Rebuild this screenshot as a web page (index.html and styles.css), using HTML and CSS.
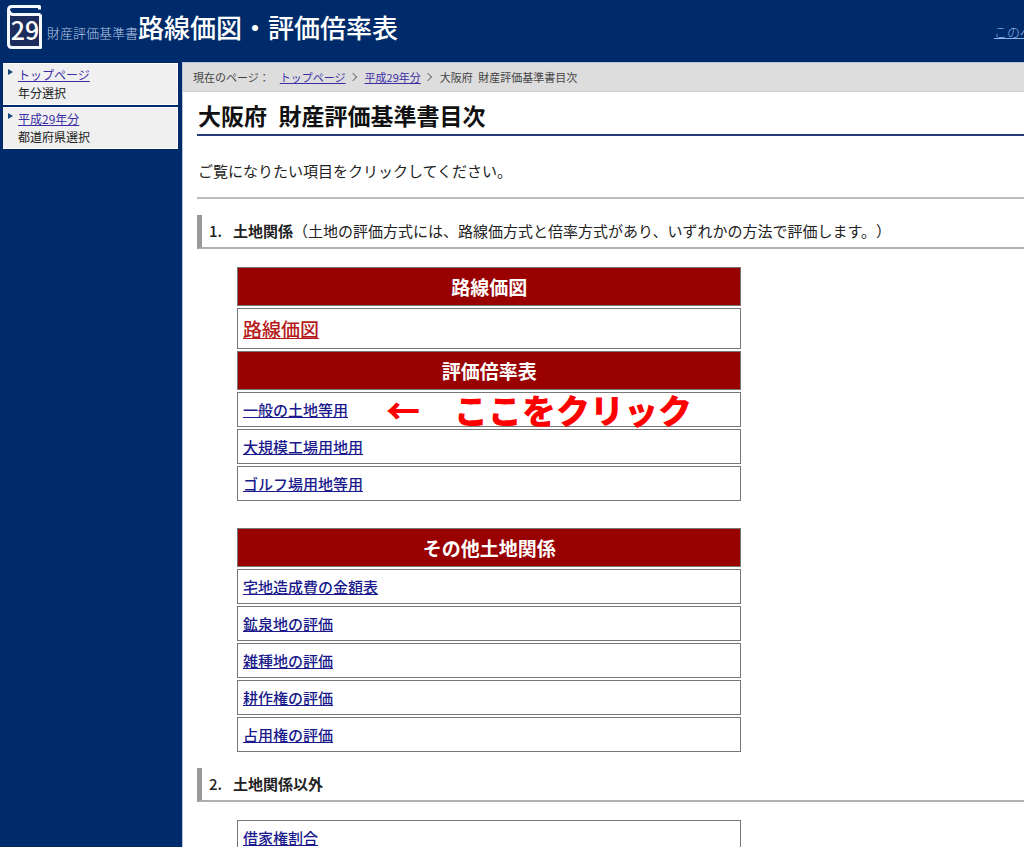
FILE: index.html
```html
<!DOCTYPE html>
<html lang="ja">
<head>
<meta charset="utf-8">
<title>路線価図・評価倍率表</title>
<link rel="stylesheet" href="styles.css">
</head>
<body>
<div class="page">
  <header class="header">
    <svg class="logo" viewBox="0 0 36 46" role="img" aria-label="29">
      <path class="logo-cover" d="M4 9.500H33.500V42.500H4.500Q2 42.500 2 39.500V6"/>
      <path class="logo-line" d="M33.500 9.500V42.500H5Q1.500 42.500 1.500 39V5Q1.500 1.500 5 1.500H32.500V4.500M2 6Q3 9.500 6 9.500H33.500"/>
      <text class="logo-text" x="18" y="35" text-anchor="middle">29</text>
    </svg>
    <p class="brand"><span class="brand-sub">財産評価基準書</span><span class="brand-main">路線価図・評価倍率表</span></p>
    <a class="help" href="#">このペ</a>
  </header>
  <div class="body">
    <nav class="side">
      <div class="side-item"><a href="#">トップページ</a><span>年分選択</span></div>
      <div class="side-item"><a href="#">平成29年分</a><span>都道府県選択</span></div>
    </nav>
    <main class="main">
      <div class="crumbs"><span>現在のページ：</span><a href="#">トップページ</a><i class="chevron"></i><a href="#">平成29年分</a><i class="chevron"></i><span>大阪府&ensp;財産評価基準書目次</span></div>
      <div class="content">
        <h1 class="title">大阪府&ensp;財産評価基準書目次</h1>
        <p class="intro">ご覧になりたい項目をクリックしてください。</p>
        <h2 class="section"><span class="num">1.</span><b>土地関係</b>（土地の評価方式には、路線価方式と倍率方式があり、いずれかの方法で評価します。）</h2>
        <table class="list">
          <tr><th>路線価図</th></tr>
          <tr><td class="large"><a class="active" href="#">路線価図</a></td></tr>
          <tr><th>評価倍率表</th></tr>
          <tr><td class="noted"><a href="#">一般の土地等用</a><strong class="note">←　ここをクリック</strong></td></tr>
          <tr><td><a href="#">大規模工場用地用</a></td></tr>
          <tr><td><a href="#">ゴルフ場用地等用</a></td></tr>
        </table>
        <table class="list">
          <tr><th>その他土地関係</th></tr>
          <tr><td><a href="#">宅地造成費の金額表</a></td></tr>
          <tr><td><a href="#">鉱泉地の評価</a></td></tr>
          <tr><td><a href="#">雑種地の評価</a></td></tr>
          <tr><td><a href="#">耕作権の評価</a></td></tr>
          <tr><td><a href="#">占用権の評価</a></td></tr>
        </table>
        <h2 class="section"><span class="num">2.</span><b>土地関係以外</b></h2>
        <table class="list">
          <tr><td><a href="#">借家権割合</a></td></tr>
        </table>
      </div>
    </main>
  </div>
</div>
</body>
</html>
```
FILE: styles.css
```css
* { box-sizing: border-box; }
body {
  margin: 0;
  background: #fff;
  color: #222;
  font-family: "Noto Sans CJK JP", sans-serif;
  font-size: 15px;
  text-spacing-trim: space-all;
}
.page {
  display: flex;
  flex-direction: column;
  height: calc(100vh - 6px);
  overflow: hidden;
  background: #002b6b;
}
.header {
  display: flex;
  flex: none;
  align-items: center;
  height: 62px;
  padding: 0 0 6px 7px;
  color: #fff;
  white-space: nowrap;
}
.logo { width: 36px; height: 46px; flex: none; }
.logo-cover { fill: #1c2c5c; }
.logo-line { fill: none; stroke: #f4f8ff; stroke-width: 3; stroke-linejoin: round; }
.logo-text { fill: #fff; font: 500 25px "Noto Sans CJK JP", sans-serif; }
.brand { margin: 0 auto 0 4px; padding-top: 3px; line-height: 38px; }
.brand-sub { color: #b5c8e8; font-size: 13px; font-weight: 300; }
.brand-main { font-size: 26px; font-weight: 500; }
.help {
  width: 30px;
  margin-top: 6px;
  overflow: hidden;
  color: #8fb4e6;
  font-size: 13px;
  font-weight: 300;
}
.body { display: flex; flex: 1; min-height: 0; }
.side {
  flex: none;
  display: flex;
  flex-direction: column;
  gap: 2px;
  width: 182px;
  padding: 1px 4px 0 3px;
}
.side-item {
  position: relative;
  display: flex;
  flex-direction: column;
  padding: 2px 0 2px 15px;
  background: #f0f0f0;
  font-size: 12px;
  line-height: 18px;
  border: 1px solid #fff;
  border-left: 0;
}
.side-item::before {
  content: "";
  position: absolute;
  left: 5px;
  top: 5px;
  border: 3px solid transparent;
  border-left: 5px solid #17477f;
  border-right: 0;
}
.side a, .crumbs a { color: #3b2ea5; }
.main {
  flex: 1;
  min-width: 0;
  border-top: 1px solid #b9c3dc;
  border-left: 1px solid #b9c3dc;
  background: #fff;
}
.crumbs {
  display: flex;
  align-items: center;
  height: 29px;
  padding-left: 10px;
  background: #ddd;
  border-bottom: 1px solid #d0d0d0;
  color: #444;
  font-size: 11px;
  white-space: nowrap;
}
.crumbs span:first-child { margin-right: 10px; }
.chevron {
  width: 6px;
  height: 6px;
  margin: 0 9px 0 4px;
  border: solid #777;
  border-width: 1px 1px 0 0;
  transform: rotate(45deg);
}
.content { padding: 6px 0 0 14px; }
.title {
  margin: 0;
  padding: 0 0 2px 1px;
  border-bottom: 2px solid #25397b;
  color: #111;
  font-size: 23px;
  font-weight: 700;
  line-height: 34px;
}
.intro {
  margin: 0 0 16px;
  padding: 23px 0 14px 1px;
  border-bottom: 2px solid #bbb;
  line-height: 24px;
}
.section {
  margin: 0 0 16px;
  padding: 4px 0 4px 7px;
  border-left: 5px solid #999;
  border-bottom: 2px solid #b0b0b0;
  font-size: 15px;
  font-weight: 400;
  line-height: 24px;
  white-space: nowrap;
}
.section b { font-weight: 700; }
.num { display: inline-block; width: 24px; font-weight: 500; }
.list {
  width: 61%;
  margin: 0 0 23px 40px;
  border-collapse: separate;
  border-spacing: 0 2px;
}
.list th, .list td { border: 1px solid #777; }
.list th {
  height: 39px;
  padding: 0;
  background: #900;
  color: #fff;
  font-size: 19px;
  font-weight: 700;
  line-height: 28px;
}
.list td { height: 35px; padding: 0 5px; font-weight: 500; line-height: 24px; }
.list td.large { height: 41px; font-size: 19px; }
.list + .section { margin-top: -9px; }
.list a { color: #1a1a8c; }
.list a.active { color: #b51a1a; }
.list td.noted { position: relative; }
.note {
  position: absolute;
  left: 148px;
  top: 0;
  color: #f00;
  font-size: 34px;
  font-weight: 900;
  line-height: 34px;
  white-space: nowrap;
}
```
